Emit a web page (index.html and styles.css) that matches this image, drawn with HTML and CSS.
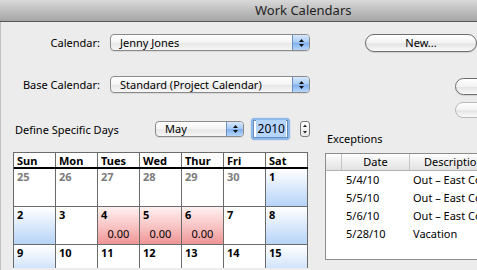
FILE: index.html
```html
<!DOCTYPE html>
<html>
<head>
<meta charset="utf-8">
<link rel="stylesheet" href="styles.css">
</head>
<body>
<div class="window">
  <div class="titlebar"><span class="title">Work Calendars</span></div>
  <div class="content">
    <div class="top">
      <div class="left">
        <div class="row row-cal">
          <span class="label">Calendar:</span>
          <div class="popup popup-wide">
            <span class="popup-text">Jenny Jones</span>
            <span class="popup-arrows"><svg width="7" height="10" viewBox="0 0 7 10"><polygon points="3.5,1 6,4 1,4" fill="#111"/><polygon points="1,6 6,6 3.5,9" fill="#111"/></svg></span>
          </div>
        </div>
        <div class="row row-base">
          <span class="label">Base Calendar:</span>
          <div class="popup popup-wide">
            <span class="popup-text">Standard (Project Calendar)</span>
            <span class="popup-arrows"><svg width="7" height="10" viewBox="0 0 7 10"><polygon points="3.5,1 6,4 1,4" fill="#111"/><polygon points="1,6 6,6 3.5,9" fill="#111"/></svg></span>
          </div>
        </div>
        <div class="row row-define">
          <span class="define-label">Define Specific Days</span>
          <div class="popup popup-month">
            <span class="popup-text">May</span>
            <span class="popup-arrows"><svg width="7" height="10" viewBox="0 0 7 10"><polygon points="3.5,1 6,4 1,4" fill="#111"/><polygon points="1,6 6,6 3.5,9" fill="#111"/></svg></span>
          </div>
          <div class="year-ring"><div class="year-field"><span class="year-sel">2010</span></div></div>
          <div class="stepper"><svg width="8" height="14" viewBox="0 0 8 14"><polygon points="4,2.5 6,5 2,5" fill="#222"/><polygon points="2,9 6,9 4,11.5" fill="#222"/></svg></div>
        </div>
      </div>
      <div class="right">
        <div class="btn btn-new">New...</div>
        <div class="btn btn-side"></div>
        <div class="btn btn-side btn-disabled"></div>
        <div class="exc-label">Exceptions</div>
      </div>
    </div>
    <div class="bottom">
      <div class="cal">
        <div class="cal-head">
          <div class="hcell">Sun</div><div class="hcell">Mon</div><div class="hcell">Tues</div><div class="hcell">Wed</div><div class="hcell">Thur</div><div class="hcell">Fri</div><div class="hcell">Sat</div>
        </div>
        <div class="cal-row">
          <div class="day other">25</div><div class="day other">26</div><div class="day other">27</div><div class="day other">28</div><div class="day other">29</div><div class="day other">30</div><div class="day weekend">1</div>
        </div>
        <div class="cal-row">
          <div class="day weekend">2</div><div class="day">3</div>
          <div class="day exception">4<span class="hours">0.00</span></div>
          <div class="day exception">5<span class="hours">0.00</span></div>
          <div class="day exception">6<span class="hours">0.00</span></div>
          <div class="day">7</div><div class="day weekend">8</div>
        </div>
        <div class="cal-row">
          <div class="day weekend">9</div><div class="day">10</div><div class="day">11</div><div class="day">12</div><div class="day">13</div><div class="day">14</div><div class="day weekend">15</div>
        </div>
      </div>
      <div class="exc">
        <div class="exc-head">
          <div class="ec ec-first"></div>
          <div class="ec ec-date">Date</div>
          <div class="ec ec-desc">Description</div>
        </div>
        <div class="exc-row"><div class="ec ec-first"></div><div class="ec ec-date">5/4/10</div><div class="ec ec-desc">Out – East Coast Trip</div></div>
        <div class="exc-row"><div class="ec ec-first"></div><div class="ec ec-date">5/5/10</div><div class="ec ec-desc">Out – East Coast Trip</div></div>
        <div class="exc-row"><div class="ec ec-first"></div><div class="ec ec-date">5/6/10</div><div class="ec ec-desc">Out – East Coast Trip</div></div>
        <div class="exc-row"><div class="ec ec-first"></div><div class="ec ec-date">5/28/10</div><div class="ec ec-desc">Vacation</div></div>
      </div>
    </div>
  </div>
</div>
</body>
</html>
```

FILE: styles.css
```css
* { box-sizing: border-box; }
html, body { margin: 0; padding: 0; }
body {
  font-family: "Noto Sans", "DejaVu Sans", sans-serif;
  font-size: 11px;
  color: #000;
  background: #ececec;
}
.window {
  width: 477px;
  height: 270px;
  overflow: hidden;
  background: #ececec;
}
.titlebar {
  height: 22px;
  border-bottom: 1px solid #555;
  background: linear-gradient(#d9d9d9, #b9b9b9 60%, #a6a6a6);
  padding-left: 255px;
  font-size: 13px;
  line-height: 21px;
  color: #1e1e1e;
  white-space: nowrap;
}
.content {
  border-left: 1px solid #c2c2c2;
  height: 248px;
}
.top {
  display: flex;
  height: 130px;
}
.left {
  width: 317px;
  flex: none;
}
.right {
  flex: 1;
  min-width: 0;
  display: flex;
  flex-direction: column;
  align-items: flex-start;
}
.row {
  display: flex;
  align-items: center;
}
.row-cal { margin-top: 12px; height: 17px; }
.row-base { margin-top: 25px; height: 17px; }
.row-define { margin-top: 25px; height: 22px; }
.label {
  width: 109px;
  padding-right: 10px;
  text-align: right;
  flex: none;
}
.define-label {
  width: 154px;
  padding-left: 14px;
  flex: none;
  white-space: nowrap;
}
.popup {
  display: flex;
  height: 17px;
  border: 1px solid #8a8a8a;
  border-radius: 4px;
  background: linear-gradient(#ffffff, #f3f3f3 50%, #e7e7e7 55%, #f6f6f6);
  box-shadow: 0 1px 0 rgba(0,0,0,0.08);
  overflow: hidden;
  flex: none;
}
.popup-wide { width: 200px; }
.popup-month { width: 89px; height: 16px; }
.popup-text {
  flex: 1;
  padding-left: 9px;
  line-height: 15px;
  white-space: nowrap;
}
.popup-month .popup-text { line-height: 14px; padding-left: 9px; }
.popup-arrows {
  width: 17px;
  flex: none;
  border-left: 1px solid #6d8fc0;
  background: linear-gradient(#d7e8fc, #a9cbf5 48%, #7fb0ef 52%, #b7d6fa);
  display: flex;
  align-items: center;
  justify-content: center;
}
.year-ring {
  margin-left: 7px;
  width: 39px;
  height: 22px;
  padding: 2px;
  border-radius: 4px;
  background: #8db8ea;
  box-shadow: 0 0 1px #6b9ee0;
  flex: none;
}
.year-field {
  height: 18px;
  background: #fff;
  border: 1px solid #6a8fbf;
  text-align: right;
  padding-right: 1px;
  line-height: 16px;
  font-size: 12px;
}
.year-sel {
  background: #b5d5fe;
  padding: 0 1px 0 2px;
}
.stepper {
  margin-left: 10px;
  width: 10px;
  height: 16px;
  border: 1px solid #7a7a7a;
  border-radius: 3px;
  background: linear-gradient(#ffffff, #e8e8e8);
  display: flex;
  align-items: center;
  justify-content: center;
  flex: none;
}
.btn {
  border: 1px solid #6e6e6e;
  border-radius: 9px;
  background: linear-gradient(#ffffff, #f2f2f2 50%, #e4e4e4 55%, #fafafa);
  box-shadow: 0 1px 1px rgba(0,0,0,0.12);
  text-align: center;
  flex: none;
}
.btn-new {
  margin-top: 12px;
  margin-left: 47px;
  width: 112px;
  height: 18px;
  line-height: 16px;
}
.btn-side {
  margin-top: 26px;
  margin-left: 137px;
  width: 60px;
  height: 17px;
}
.btn-disabled {
  margin-top: 7px;
  height: 16px;
  border-color: #b9b9b9;
  box-shadow: none;
}
.exc-label {
  margin-top: 14px;
  padding-left: 9px;
  line-height: 14px;
}
.bottom {
  display: flex;
  align-items: flex-start;
}
.cal {
  margin-left: 12px;
  width: 295px;
  height: 116px;
  overflow: hidden;
  border-left: 1px solid #6b6b6b;
  border-top: 1px solid #6b6b6b;
  background: #fff;
  flex: none;
}
.cal-head, .cal-row {
  display: grid;
  grid-template-columns: repeat(7, 42px);
}
.cal-head {
  height: 16px;
  border-bottom: 2px solid #000;
}
.hcell {
  border-right: 1px solid #6b6b6b;
  font-weight: bold;
  padding-left: 3px;
  line-height: 13px;
  padding-top: 1px;
}
.cal-row { height: 38px; }
.day {
  position: relative;
  border-right: 1px solid #6b6b6b;
  border-bottom: 1px solid #6b6b6b;
  font-weight: bold;
  padding-left: 3px;
  line-height: 13px;
  padding-top: 1px;
  display: flex;
  flex-direction: column;
}
.day.other { color: #7c7c7c; }
.day.weekend {
  background: linear-gradient(#ffffff, #e6f0fc 35%, #b6d4f8);
}
.day.exception {
  background: linear-gradient(#fff1f1, #f8c6c6 50%, #ef9595);
}
.hours {
  margin-top: auto;
  margin-bottom: 4px;
  font-weight: normal;
  text-align: center;
  padding-right: 3px;
}
.exc {
  margin-left: 17px;
  margin-top: 1px;
  width: 200px;
  height: 107px;
  border: 1px solid #8c8c8c;
  background: #fff;
  flex: none;
  overflow: hidden;
}
.exc-head, .exc-row {
  display: flex;
  white-space: nowrap;
}
.exc-head {
  height: 17px;
  line-height: 16px;
  background: linear-gradient(#ffffff, #eeeeee 50%, #e2e2e2);
  border-bottom: 1px solid #b3b3b3;
}
.exc-row {
  height: 18px;
  line-height: 18px;
}
.ec { flex: none; }
.ec-first { width: 16px; }
.ec-date { width: 68px; padding-left: 4px; }
.ec-desc { width: 120px; padding-left: 3px; }
.exc-head .ec-first, .exc-head .ec-date { border-right: 1px solid #c4c4c4; }
.exc-head .ec-date { text-align: center; padding-left: 0; }
.exc-head .ec-desc { padding-left: 14px; }
```
